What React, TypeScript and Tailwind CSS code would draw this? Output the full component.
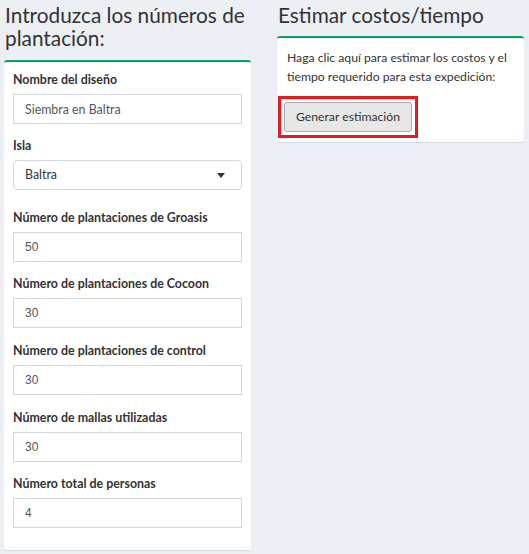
import React, { useState } from "react";

const fields = [
  { label: "Número de plantaciones de Groasis", value: "50", gap: "mt-[20px]" },
  { label: "Número de plantaciones de Cocoon", value: "30", gap: "mt-[14px]" },
  { label: "Número de plantaciones de control", value: "30", gap: "mt-[15px]" },
  { label: "Número de mallas utilizadas", value: "30", gap: "mt-[15px]" },
  { label: "Número total de personas", value: "4", gap: "mt-[14px]" },
];

const Label = ({ children }: { children: React.ReactNode }) => (
  <label className="block text-[12.4px] font-bold leading-[16px] text-[#333] mb-[6px]">{children}</label>
);

const App = () => {
  const [name, setName] = useState("Siembra en Baltra");
  const [values, setValues] = useState(fields.map((f) => f.value));

  return (
    <div
      className="min-h-[554px] w-[529px] bg-[#ecf0f5] text-[#333]"
      style={{ fontFamily: "Lato, 'Noto Sans', sans-serif" }}
    >
      <div className="grid grid-cols-[247px_247px] gap-[26px] pl-[4px]">
        {/* Plantation numbers */}
        <div>
          <h3 className="mt-[3px] pl-[1px] text-[20.8px] leading-[23px] font-normal text-[#333]">
            Introduzca los números de plantación:
          </h3>
          <div className="mt-[11px] bg-white border-t-2 border-[#00a65a] rounded-[3px] shadow-[0_1px_1px_rgba(0,0,0,0.1)] px-[9px] pt-[10px] pb-[22px]">
            <div>
              <Label>Nombre del diseño</Label>
              <input
                type="text"
                value={name}
                onChange={(e) => setName(e.target.value)}
                className="w-full h-[30px] border border-[#d2d6de] px-[11px] text-[12.4px] text-[#555] outline-none"
              />
            </div>

            <div className="mt-[14px]">
              <Label>Isla</Label>
              <div className="flex items-center justify-between h-[30px] border border-[#d2d6de] rounded-[4px] px-[11px] text-[12.4px] text-[#333]">
                <span>Baltra</span>
                <span className="mr-[5px] w-0 h-0 border-l-[4px] border-r-[4px] border-t-[5px] border-l-transparent border-r-transparent border-t-[#333]" />
              </div>
            </div>

            {fields.map((f, i) => (
              <div key={f.label} className={f.gap}>
                <Label>{f.label}</Label>
                <input
                  type="number"
                  value={values[i]}
                  onChange={(e) => {
                    const next = [...values];
                    next[i] = e.target.value;
                    setValues(next);
                  }}
                  className="w-full h-[30px] border border-[#d2d6de] px-[11px] text-[12px] text-[#555] outline-none"
                  style={{ fontFamily: "'Liberation Sans', Arial, sans-serif" }}
                />
              </div>
            ))}
          </div>
        </div>

        {/* Estimate */}
        <div>
          <h3 className="mt-[3px] pl-[1px] text-[20.8px] leading-[23px] font-normal text-[#333]">
            Estimar costos/tiempo
          </h3>
          <div className="mt-[10px] bg-white border-t-2 border-[#00a65a] rounded-[3px] shadow-[0_1px_1px_rgba(0,0,0,0.1)] pl-[1px] pr-[10px] pt-[10px] pb-[4px]">
            <p className="pl-[9px] text-[12.2px] leading-[19px] text-[#333]">
              Haga clic aquí para estimar los costos y el tiempo requerido para esta expedición:
            </p>
            <div className="mt-[10px] inline-block border-[3px] border-[#e31b23] p-[3px]">
              <button
                type="button"
                className="h-[30px] px-[11px] bg-[#e7e7e7] border border-[#adadad] rounded-[3px] text-[12.2px] text-[#333]"
              >
                Generar estimación
              </button>
            </div>
          </div>
        </div>
      </div>
    </div>
  );
};

export default App;
